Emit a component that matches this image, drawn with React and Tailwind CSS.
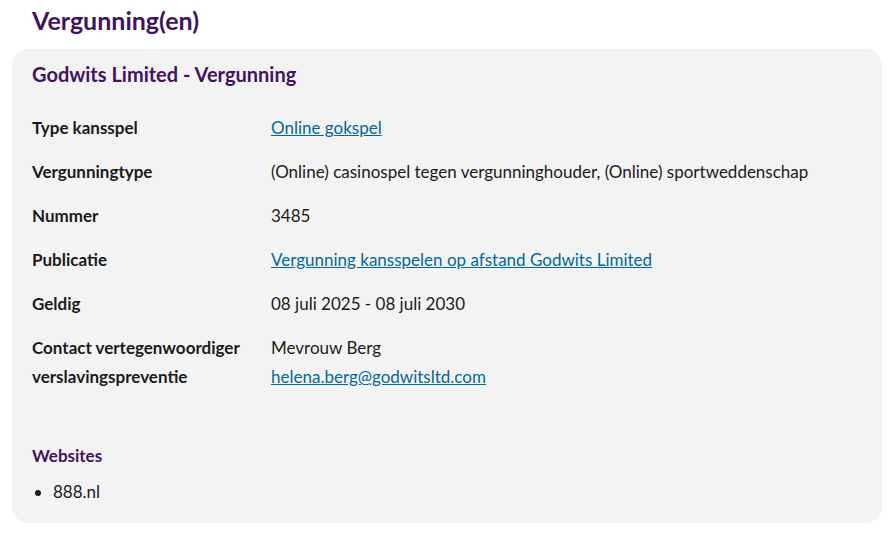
export default function App() {
  const rows = [
    { label: "Type kansspel", value: <a href="#" className="text-[#01689b] underline">Online gokspel</a> },
    { label: "Vergunningtype", value: "(Online) casinospel tegen vergunninghouder, (Online) sportweddenschap" },
    { label: "Nummer", value: "3485" },
    { label: "Publicatie", value: <a href="#" className="text-[#01689b] underline">Vergunning kansspelen op afstand Godwits Limited</a> },
    { label: "Geldig", value: "08 juli 2025 - 08 juli 2030" },
  ];
  return (
    <div className="bg-white w-[889px] h-[533px] pl-3 pt-[4px]" style={{ fontFamily: "Lato, 'Noto Sans', sans-serif" }}>
      <h1 className="pl-5 text-[25px] leading-[32px] font-bold text-[#42145f]">Vergunning(en)</h1>
      <div className="mt-[13px] w-[870px] bg-[#f3f3f3] rounded-2xl px-5 pt-[12px] pb-[18px] text-[17px] text-[#1a1a1a]">
        <h2 className="text-[20px] leading-[26px] font-bold text-[#42145f]">Godwits Limited - Vergunning</h2>
        <dl className="mt-[26px] grid grid-cols-[239px_1fr] gap-y-[15px] leading-[29px]">
          {rows.map((r) => (
            <div key={r.label} className="contents">
              <dt className="font-bold">{r.label}</dt>
              <dd>{r.value}</dd>
            </div>
          ))}
          <dt className="font-bold">Contact vertegenwoordiger verslavingspreventie</dt>
          <dd>
            Mevrouw Berg
            <br />
            <a href="#" className="text-[#01689b] underline">helena.berg@godwitsltd.com</a>
          </dd>
        </dl>
        <h3 className="mt-[53px] text-[17px] leading-[24px] font-bold text-[#42145f]">Websites</h3>
        <ul className="mt-[11px] list-disc pl-[21px] leading-[26px]">
          <li>888.nl</li>
        </ul>
      </div>
    </div>
  );
}
